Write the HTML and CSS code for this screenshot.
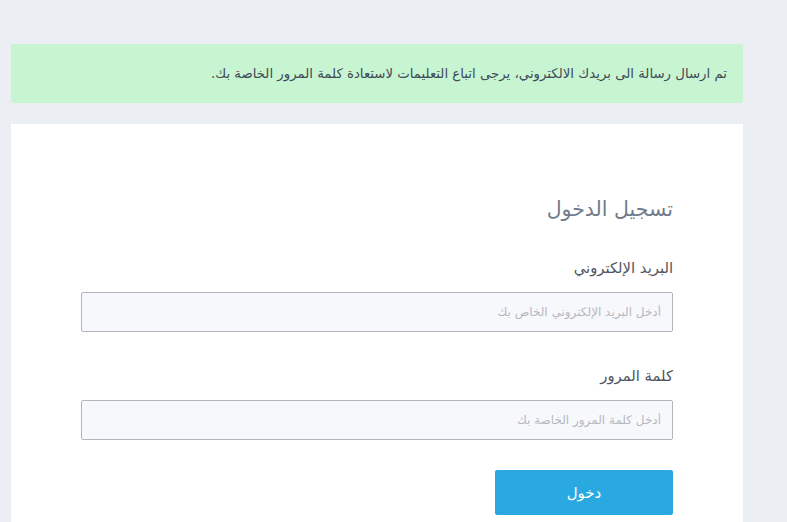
FILE: index.html
```html
<!DOCTYPE html>
<html lang="ar" dir="rtl">
<head>
<meta charset="utf-8">
<title>تسجيل الدخول</title>
<link rel="stylesheet" href="styles.css">
</head>
<body>
<div class="page">
  <div class="alert">تم ارسال رسالة الى بريدك الالكتروني، يرجى اتباع التعليمات لاستعادة كلمة المرور الخاصة بك.</div>
  <div class="card">
    <h1 class="title">تسجيل الدخول</h1>
    <div class="field">
      <label class="label">البريد الإلكتروني</label>
      <input class="input" type="email" placeholder="أدخل البريد الإلكتروني الخاص بك">
    </div>
    <div class="field">
      <label class="label">كلمة المرور</label>
      <input class="input" type="password" placeholder="أدخل كلمة المرور الخاصة بك">
    </div>
    <button class="btn" type="button">دخول</button>
  </div>
</div>
</body>
</html>
```
FILE: styles.css
```css
html, body {
  margin: 0;
  padding: 0;
  background: #ebeef3;
  font-family: "DejaVu Sans", sans-serif;
}
.page {
  width: 732px;
  margin-right: 44px;
  padding-top: 44px;
  height: 478px;
  display: flex;
  flex-direction: column;
  gap: 21px;
}
.alert {
  background: #c8f5d1;
  border-radius: 3px;
  height: 59px;
  box-sizing: border-box;
  padding: 0 16px;
  display: flex;
  align-items: center;
  font-size: 13.3px;
  color: #3f4a57;
}
.card {
  flex: 1;
  background: #fff;
  padding: 70px 70px 0;
  display: flex;
  flex-direction: column;
  align-items: stretch;
}
.title {
  margin: 0 0 34px;
  font-size: 20.5px;
  font-weight: normal;
  color: #6f7c8c;
  line-height: 30px;
}
.field {
  display: flex;
  flex-direction: column;
  gap: 14px;
}
.field + .field {
  margin-top: 34px;
}
.label {
  font-size: 14.8px;
  color: #4e5561;
  line-height: 20px;
}
.input {
  height: 40px;
  box-sizing: border-box;
  border: 1px solid #b3b6bd;
  border-radius: 2px;
  background: #f7f8fc;
  padding: 0 11px;
  font-family: inherit;
  font-size: 12px;
  color: #333;
}
.input::placeholder {
  color: #b5b8bf;
}
.btn {
  align-self: flex-start;
  width: 178px;
  height: 45px;
  margin-top: 30px;
  border: none;
  border-radius: 2px;
  background: #2aa9e0;
  color: #fff;
  font-family: inherit;
  font-size: 15px;
}
```
